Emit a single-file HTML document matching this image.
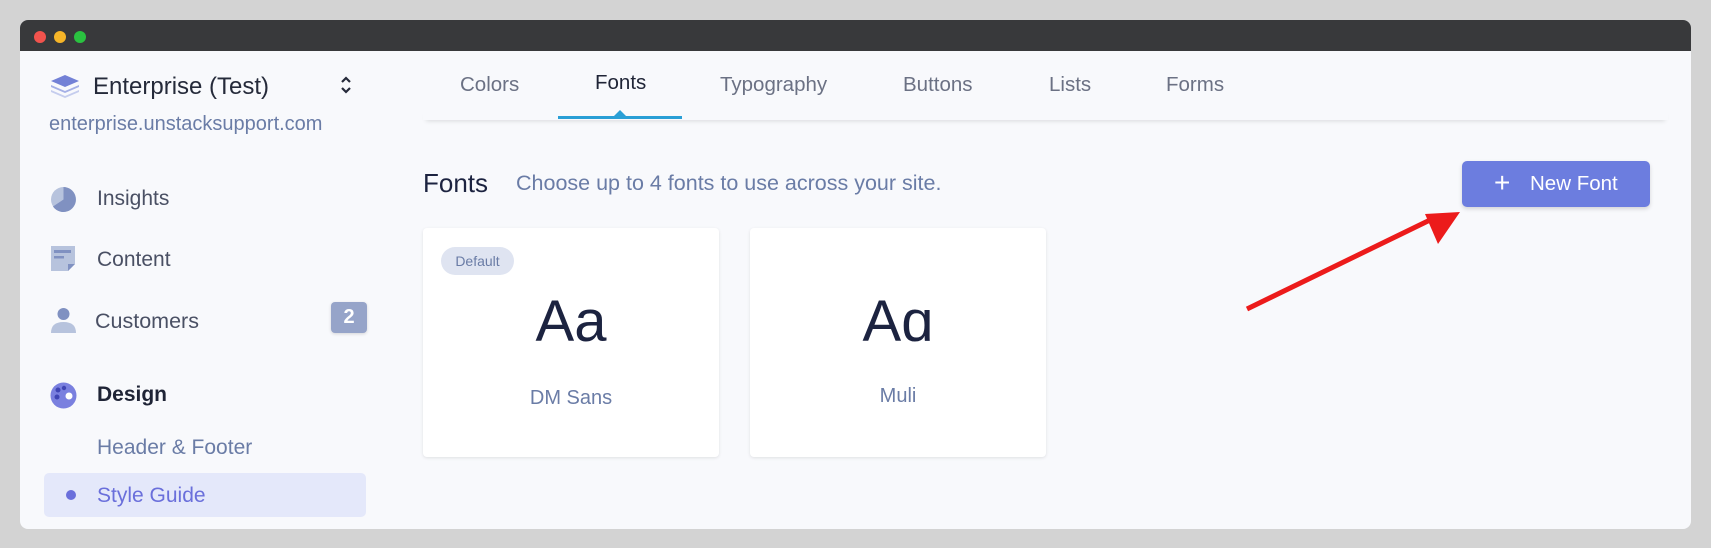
<!DOCTYPE html>
<html><head><meta charset="utf-8"><style>
*{margin:0;padding:0;box-sizing:border-box}
body{width:1711px;height:548px;background:#d3d3d3;font-family:"Liberation Sans",sans-serif;position:relative;overflow:hidden}
.win{position:absolute;left:20px;top:20px;width:1671px;height:509px;background:#f8f9fc;border-radius:8px;overflow:hidden}
.tb{position:absolute;left:0;top:0;right:0;height:31px;background:#38393b}
.dot{position:absolute;top:11px;width:12px;height:12px;border-radius:50%}
.a{position:absolute;white-space:nowrap}
.side{color:#4a5064;font-size:21px}
.tab{position:absolute;top:72px;font-size:20.5px;color:#6b7184}
.card{position:absolute;top:208px;width:296px;height:229px;background:#fff;border-radius:4px;box-shadow:0 1px 3px rgba(0,0,0,.1)}
.aa{position:absolute;left:0;right:0;top:58px;text-align:center;font-size:58px;color:#1c2340}
.fn{position:absolute;left:0;right:0;top:157px;text-align:center;font-size:20px;color:#6a7ca6}
</style></head><body>
<div class="win">
<div class="tb"></div>
<div class="dot" style="left:14px;background:#f2534d"></div>
<div class="dot" style="left:34px;background:#f6b528"></div>
<div class="dot" style="left:54px;background:#2ac240"></div>

<svg class="a" style="left:29px;top:53px" width="32" height="26" viewBox="0 0 32 26"><path d="M16 2 L30 8 L16 14 L2 8Z" fill="#7381d6"/><path d="M2 12 L16 18 L30 12 L30 14 L16 20 L2 14Z" fill="#a5b0e6"/><path d="M2 17 L16 23 L30 17 L30 19 L16 25 L2 19Z" fill="#c5cdee"/></svg>
<div class="a" style="left:73px;top:53px;font-size:24px;color:#252a3a">Enterprise (Test)</div>
<svg class="a" style="left:319px;top:55px" width="14" height="20" viewBox="0 0 14 20"><path d="M3 7 L7 3 L11 7 M3 13 L7 17 L11 13" stroke="#252a3a" stroke-width="2.2" fill="none"/></svg>
<div class="a" style="left:29px;top:93px;font-size:20px;color:#6a7ca6">enterprise.unstacksupport.com</div>

<svg class="a" style="left:30px;top:166px" width="27" height="27" viewBox="0 0 27 27"><circle cx="13.5" cy="13.5" r="12.5" fill="#b7c3dd"/><path d="M13.5 13.5 L13.5 1 A12.5 12.5 0 1 1 3 20.5Z" fill="#8091c1"/></svg>
<div class="a side" style="left:77px;top:167px">Insights</div>
<svg class="a" style="left:31px;top:226px" width="25" height="26" viewBox="0 0 25 26"><path d="M0 0H24V18L17 25H0Z" fill="#b7c3dd"/><rect x="3" y="4" width="17" height="3" fill="#8091c1"/><rect x="3" y="10" width="10" height="2.5" fill="#8091c1"/><path d="M17 25V18H24Z" fill="#8091c1"/></svg>
<div class="a side" style="left:77px;top:228px">Content</div>
<svg class="a" style="left:30px;top:287px" width="27" height="27" viewBox="0 0 27 27"><circle cx="13.5" cy="7" r="6" fill="#8091c1"/><path d="M1 26 Q1 15 13.5 15 Q26 15 26 26Z" fill="#b7c3dd"/></svg>
<div class="a side" style="left:75px;top:289px;font-size:21.5px">Customers</div>
<div class="a" style="left:311px;top:282px;width:36px;height:31px;background:#96a4c9;border-radius:4px;color:#fff;font-size:20px;font-weight:bold;text-align:center;line-height:31px;box-shadow:0 1px 3px rgba(0,0,0,.15)">2</div>

<svg class="a" style="left:30px;top:362px" width="27" height="27" viewBox="0 0 27 27"><circle cx="13.5" cy="13.5" r="13" fill="#7a80df"/><circle cx="8" cy="8" r="2.5" fill="#3f45b4"/><circle cx="14" cy="6" r="2.2" fill="#3f45b4"/><circle cx="7" cy="15" r="2.5" fill="#3f45b4"/><circle cx="19" cy="14" r="3.5" fill="#fff"/></svg>
<div class="a side" style="left:77px;top:363px;font-weight:bold;color:#1f2436">Design</div>
<div class="a side" style="left:77px;top:416px;color:#6a7ca6">Header &amp; Footer</div>
<div class="a" style="left:24px;top:453px;width:322px;height:44px;background:#e4e8fa;border-radius:5px"></div>
<div class="a" style="left:46px;top:470px;width:10px;height:10px;border-radius:50%;background:#6a6fdb"></div>
<div class="a side" style="left:77px;top:464px;color:#6a6fdb">Style Guide</div>

<div class="a" style="left:403px;top:88px;width:1245px;height:12px;box-shadow:0 4px 5px -3px rgba(0,0,0,.13)"></div>
<div class="tab" style="left:440px;top:53px">Colors</div>
<div class="tab" style="left:575px;top:51px;color:#1f2436">Fonts</div>
<div class="tab" style="left:700px;top:53px">Typography</div>
<div class="tab" style="left:883px;top:53px">Buttons</div>
<div class="tab" style="left:1029px;top:53px">Lists</div>
<div class="tab" style="left:1146px;top:53px">Forms</div>
<div class="a" style="left:538px;top:96px;width:124px;height:3px;background:#2a9fd6"></div>
<div class="a" style="left:594px;top:90px;width:0;height:0;border-left:6px solid transparent;border-right:6px solid transparent;border-bottom:6px solid #2a9fd6"></div>

<div class="a" style="left:403px;top:148px;font-size:26px;color:#1c2340">Fonts</div>
<div class="a" style="left:496px;top:151px;font-size:21.5px;color:#6a7ca6">Choose up to 4 fonts to use across your site.</div>

<div class="card" style="left:403px"><div class="a" style="left:18px;top:19px;width:73px;height:28px;border-radius:14px;background:#dfe4f1;color:#6a7ca6;font-size:14px;text-align:center;line-height:28px">Default</div><div class="aa" style="top:60px">Aa</div><div class="fn" style="top:159px">DM Sans</div></div>
<div class="card" style="left:730px"><div class="aa" style="top:60px">Aɑ</div><div class="fn" style="top:157px">Muli</div></div>

<div class="a" style="left:1442px;top:141px;width:188px;height:46px;background:#6c7ddf;border-radius:5px;color:#fff;font-size:20.5px;line-height:46px;box-shadow:0 2px 4px rgba(0,0,0,.15)"><span style="position:absolute;left:32px;top:-1px;font-size:28px">+</span><span style="position:absolute;left:68px">New Font</span></div>
</div>
<svg class="a" style="left:0;top:0" width="1711" height="548"><line x1="1247" y1="309" x2="1430" y2="220" stroke="#ec1b1b" stroke-width="5"/><path d="M1460 212 L1425 214 L1438 244Z" fill="#ec1b1b"/></svg>
</body></html>
